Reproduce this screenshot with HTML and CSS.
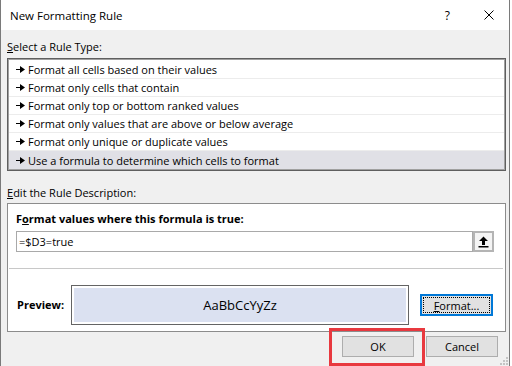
FILE: index.html
```html
<!DOCTYPE html>
<html lang="en">
<head>
  <meta charset="UTF-8">
  <title>New Formatting Rule</title>
  <link rel="stylesheet" href="styles.css">
</head>
<body>
  <div class="window">
    <div class="titlebar">
      <span class="title">New Formatting Rule</span>
      <span class="help">?</span>
      <svg class="close" width="10" height="10" viewBox="0 0 10 10">
        <path d="M0.5 0.5 L9.5 9.5 M9.5 0.5 L0.5 9.5" stroke="#000" stroke-width="1" fill="none"/>
      </svg>
    </div>

    <div class="content">
      <div class="label"><u>S</u>elect a Rule Type:</div>
      <ul class="rule-list">
        <li><svg class="pointer" width="9" height="7" viewBox="0 0 9 7"><path d="M0 3h4v1H0z M4 0l5 3.5L4 7z" fill="#000"/></svg>Format all cells based on their values</li>
        <li><svg class="pointer" width="9" height="7" viewBox="0 0 9 7"><path d="M0 3h4v1H0z M4 0l5 3.5L4 7z" fill="#000"/></svg>Format only cells that contain</li>
        <li><svg class="pointer" width="9" height="7" viewBox="0 0 9 7"><path d="M0 3h4v1H0z M4 0l5 3.5L4 7z" fill="#000"/></svg>Format only top or bottom ranked values</li>
        <li><svg class="pointer" width="9" height="7" viewBox="0 0 9 7"><path d="M0 3h4v1H0z M4 0l5 3.5L4 7z" fill="#000"/></svg>Format only values that are above or below average</li>
        <li><svg class="pointer" width="9" height="7" viewBox="0 0 9 7"><path d="M0 3h4v1H0z M4 0l5 3.5L4 7z" fill="#000"/></svg>Format only unique or duplicate values</li>
        <li class="selected"><svg class="pointer" width="9" height="7" viewBox="0 0 9 7"><path d="M0 3h4v1H0z M4 0l5 3.5L4 7z" fill="#000"/></svg>Use a formula to determine which cells to format</li>
      </ul>

      <div class="label label-edit"><u>E</u>dit the Rule Description:</div>
      <div class="panel">
        <div class="panel-top">
          <div class="bold-label">F<u>o</u>rmat values where this formula is true:</div>
          <div class="formula-row">
            <div class="formula-input">=$D3=true</div>
            <div class="collapse-btn">
              <svg width="11" height="12" viewBox="0 0 11 12">
                <path d="M5.5 0.5 L10 5 H7 V9 H4 V5 H1 Z" fill="#000"/>
                <rect x="0.5" y="10" width="10" height="1.5" fill="#000"/>
              </svg>
            </div>
          </div>
        </div>
        <div class="separator"></div>
        <div class="preview-row">
          <div class="bold-label preview-label">Preview:</div>
          <div class="preview-box">
            <div class="preview-fill">AaBbCcYyZz</div>
          </div>
          <div class="btn btn-focus"><span class="focus-ring"><u>F</u>ormat...</span></div>
        </div>
      </div>

      <div class="buttons">
        <div class="btn btn-ok">OK</div>
        <div class="btn">Cancel</div>
      </div>
    </div>

    <svg class="grip" width="11" height="9" viewBox="0 0 11 9">
      <rect x="8" y="0" width="2" height="2" fill="#c4c4c4"/>
      <rect x="5" y="3" width="2" height="2" fill="#c4c4c4"/>
      <rect x="8" y="3" width="2" height="2" fill="#c4c4c4"/>
      <rect x="2" y="6" width="2" height="2" fill="#c4c4c4"/>
      <rect x="5" y="6" width="2" height="2" fill="#c4c4c4"/>
      <rect x="8" y="6" width="2" height="2" fill="#c4c4c4"/>
    </svg>
  </div>
</body>
</html>
```

FILE: styles.css
```css
:root {
  --face: #f0f0f0;
  --button: #e1e1e1;
  --button-border: #adadad;
  --frame: #7a7a7a;
  --accent: #0078d7;
  --annotate: #e8393f;
}

html, body {
  margin: 0;
  padding: 0;
  background: #ffffff;
}

body {
  font-family: 'Open Sans', 'Noto Sans', sans-serif;
  font-size: 11px;
  color: #000;
}

.window {
  position: relative;
  width: 510px;
  height: 366px;
  box-sizing: border-box;
  border-left: 1px solid var(--frame);
  border-right: 1px solid var(--frame);
  background: var(--face);
}

.titlebar {
  height: 30px;
  background: #ffffff;
  display: flex;
  align-items: center;
}

.title {
  padding-left: 9px;
  font-size: 11.5px;
}

.help {
  margin-left: auto;
  font-size: 12px;
}

.close {
  margin-left: 34px;
  margin-right: 15px;
}

.content {
  padding: 0 3px 0 6px;
}

.label {
  padding-top: 9px;
  line-height: 16px;
}

.label-edit {
  padding-top: 14px;
}

.rule-list {
  list-style: none;
  margin: 3px 0 0 0;
  border: 1px solid #5f5f5f;
  box-shadow: inset 0 0 0 1px #a0a0a0;
  background: #ffffff;
  padding: 2px 1px 1px 1px;
}

.rule-list li {
  height: 18px;
  box-sizing: border-box;
  border-bottom: 1px solid #ececec;
  display: flex;
  align-items: center;
  padding-left: 7px;
}

.rule-list li.selected {
  background: #e0e0e6;
  border-bottom: none;
}

.pointer {
  margin-right: 3px;
  flex: none;
}

.panel {
  margin-top: 2px;
  background: #ffffff;
  border: 1px solid #8c8c8c;
}

.panel-top {
  padding: 7px 11px 16px 8px;
}

.bold-label {
  font-weight: 700;
  line-height: 16px;
}

.formula-row {
  display: flex;
  margin-top: 4px;
  height: 21px;
}

.formula-input {
  flex: 1;
  border: 1px solid #a9a9a9;
  padding-left: 2px;
  line-height: 19px;
}

.collapse-btn {
  width: 21px;
  box-sizing: border-box;
  border: 2px solid #b4b4b4;
  background: #f4f4f4;
  display: flex;
  align-items: center;
  justify-content: center;
}

.separator {
  margin: 0 2px 0 1px;
  border-top: 1px solid #c8c8c8;
}

.preview-row {
  display: flex;
  align-items: center;
  padding: 16px 11px 6px 9px;
}

.preview-label {
  width: 54px;
  flex: none;
}

.preview-box {
  width: 338px;
  height: 40px;
  box-sizing: border-box;
  border: 1px solid #646464;
  padding: 2px;
  flex: none;
}

.preview-fill {
  height: 100%;
  background: #dbe1f1;
  display: flex;
  align-items: center;
  justify-content: center;
  font-size: 13px;
}

.btn {
  width: 72px;
  height: 21px;
  box-sizing: border-box;
  background: var(--button);
  border: 1px solid var(--button-border);
  display: flex;
  align-items: center;
  justify-content: center;
}

.btn-focus {
  margin-left: 11px;
  width: 73px;
  height: 22px;
  border: 2px solid var(--accent);
  padding: 1px;
}

.focus-ring {
  width: 100%;
  height: 100%;
  box-sizing: border-box;
  border: 1px dotted #000;
  display: flex;
  align-items: center;
  justify-content: center;
}

.buttons {
  display: flex;
  justify-content: flex-end;
  gap: 12px;
  margin-top: 4px;
  padding-right: 8px;
}

.btn-ok {
  position: relative;
}

.btn-ok::after {
  content: "";
  position: absolute;
  top: -9px;
  left: -14px;
  right: -12px;
  bottom: -10px;
  border: 3px solid var(--annotate);
}

.grip {
  position: absolute;
  right: 0;
  bottom: 0;
}
```
